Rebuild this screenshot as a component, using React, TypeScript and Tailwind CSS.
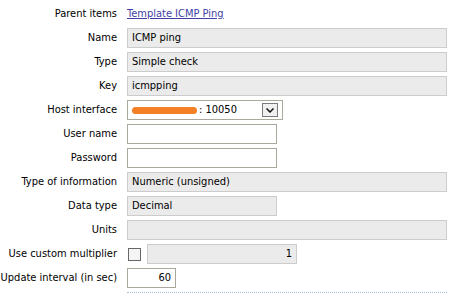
import React from 'react';

const font = { fontFamily: '"DejaVu Sans Condensed", "DejaVu Sans", Tahoma, sans-serif' };

function Row({ label, children }: { label: string; children: React.ReactNode }) {
  return (
    <div className="flex items-center h-[20px]">
      <div className="w-[117px] shrink-0 text-right whitespace-nowrap">{label}</div>
      <div className="ml-[10px] flex items-center">{children}</div>
    </div>
  );
}

function Ro({ value, w = 'w-[320px]' }: { value?: string; w?: string }) {
  return (
    <div className={`${w} h-[20px] bg-[#ebebeb] border border-[#cccccc] px-[4px] flex items-center`}>
      {value}
    </div>
  );
}

function Edit({ w, value, right }: { w: string; value?: string; right?: boolean }) {
  return (
    <div
      className={`${w} h-[20px] bg-white border border-[#a9a89a] px-[4px] flex items-center ${
        right ? 'justify-end' : ''
      }`}
    >
      {value}
    </div>
  );
}

export default function App() {
  return (
    <div className="w-[460px] h-[293px] bg-white text-[11px] text-black overflow-hidden" style={font}>
      <div className="flex flex-col gap-[4px] pt-[4px]">
        <Row label="Parent items">
          <a href="#" className="text-[#3f3fa5] underline">
            Template ICMP Ping
          </a>
        </Row>
        <Row label="Name">
          <Ro value="ICMP ping" />
        </Row>
        <Row label="Type">
          <Ro value="Simple check" />
        </Row>
        <Row label="Key">
          <Ro value="icmpping" />
        </Row>
        <Row label="Host interface">
          <div className="w-[156px] h-[20px] bg-white border border-[#a9a89a] pl-[4px] pr-[4px] flex items-center">
            <span className="w-[65px] h-[7px] rounded-full bg-[#f47f24]" />
            <span className="ml-[2px]">: 10050</span>
            <span className="ml-auto w-[16px] h-[14px] bg-[#f0f0f0] border border-[#7a7a7a] flex items-center justify-center">
              <svg width="8" height="5" viewBox="0 0 8 5">
                <path d="M0.5 0.5 L4 4 L7.5 0.5" fill="none" stroke="#111" strokeWidth="1.5" />
              </svg>
            </span>
          </div>
        </Row>
        <Row label="User name">
          <Edit w="w-[150px]" />
        </Row>
        <Row label="Password">
          <Edit w="w-[150px]" />
        </Row>
        <Row label="Type of information">
          <Ro value="Numeric (unsigned)" />
        </Row>
        <Row label="Data type">
          <Ro value="Decimal" w="w-[150px]" />
        </Row>
        <Row label="Units">
          <Ro />
        </Row>
        <Row label="Use custom multiplier">
          <span className="ml-[1px] w-[13px] h-[13px] border border-[#666] bg-[#f4f4f4]" />
          <div className="ml-[6px] w-[150px] h-[20px] bg-[#ebebeb] border border-[#cccccc] px-[4px] flex items-center justify-end">
            1
          </div>
        </Row>
        <Row label="Update interval (in sec)">
          <Edit w="w-[49px]" value="60" right />
        </Row>
      </div>
      <div className="ml-[127px] mt-[4px] w-[320px] border-t border-dotted border-[#a8b8e4]" />
    </div>
  );
}
